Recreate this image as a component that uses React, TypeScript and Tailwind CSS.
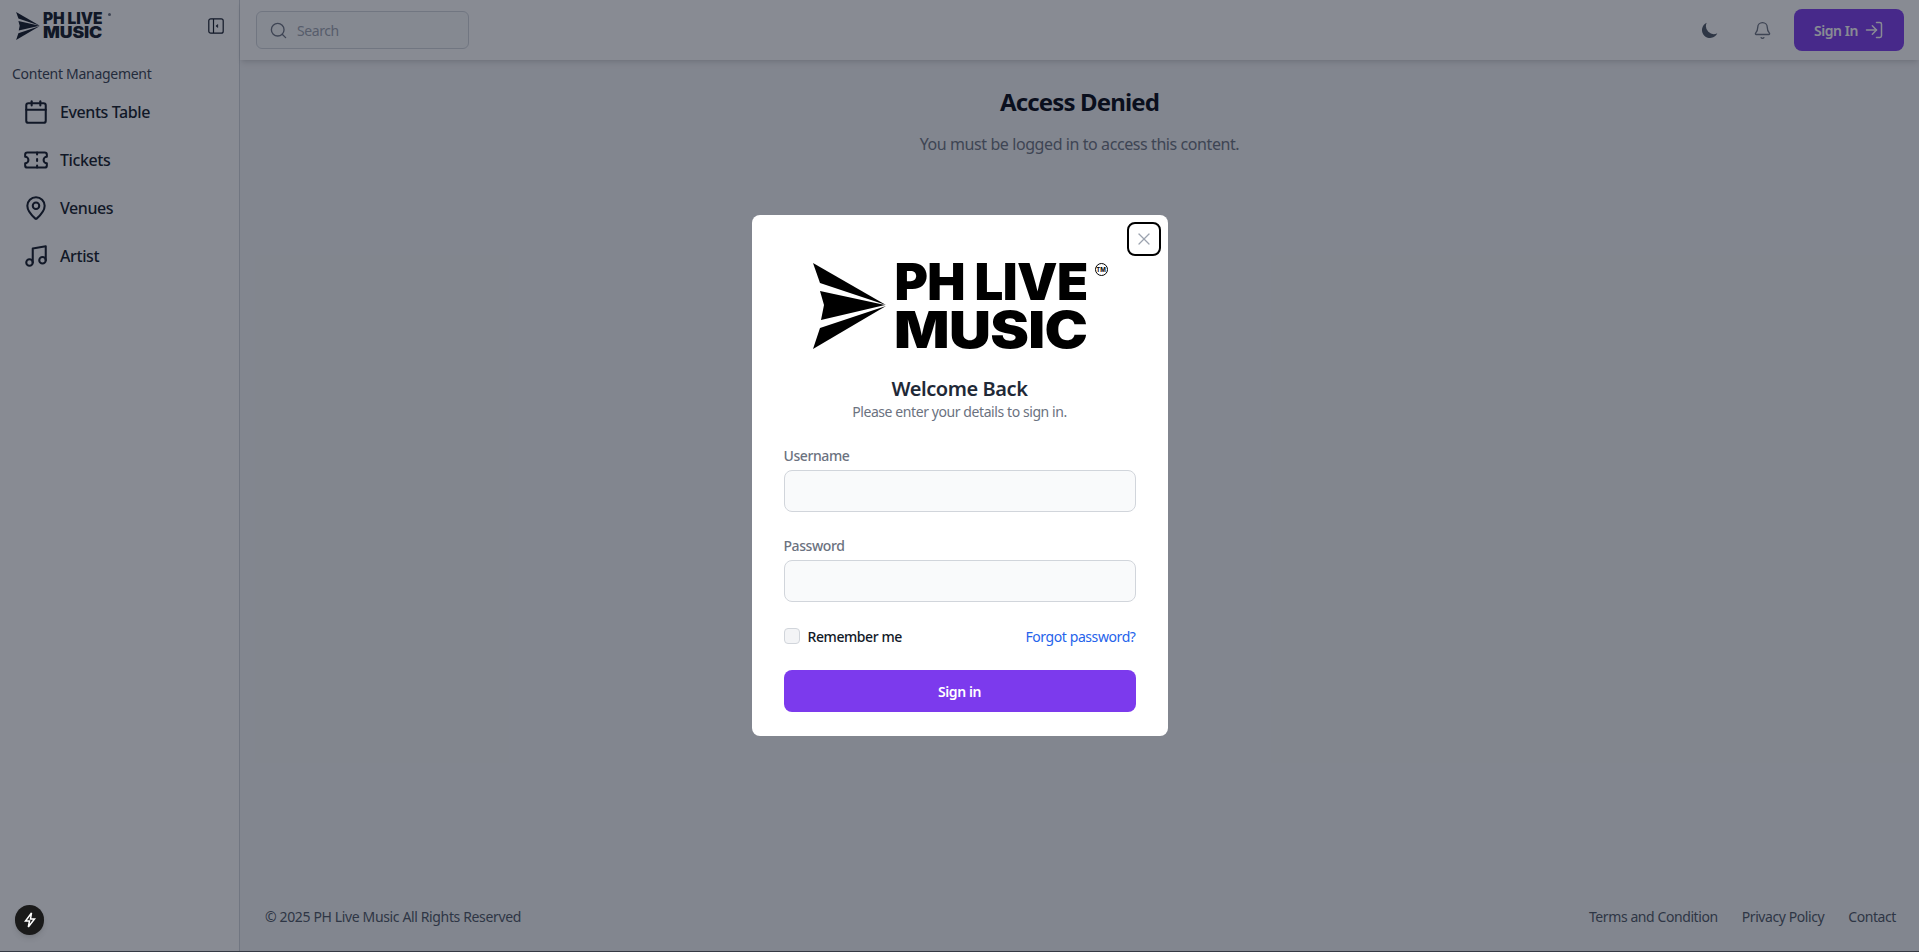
import { Bell, Calendar, LogIn, MapPin, Music, Search, Ticket, X } from "lucide-react";

const font = { fontFamily: '"Noto Sans", sans-serif' };

function Arrow({ className }: { className: string }) {
  return (
    <svg viewBox="0 0 73 86" className={className} fill="currentColor">
      <polygon points="0,0 73,42 7,20" />
      <polygon points="7,28 72,42 8,57 11,42" />
      <polygon points="73,43 7,65 0,86" />
    </svg>
  );
}

function Toggle() {
  return (
    <svg viewBox="0 0 16 16" className="w-[16px] h-[16px] mt-[6px] text-[#111827]" fill="none" stroke="currentColor" strokeWidth="1.2">
      <rect x="0.8" y="0.8" width="14.4" height="14.4" rx="2" />
      <path d="M5.5 1v14" />
      <path d="M10 6.6 8.6 8l1.4 1.4" strokeWidth="1.3" />
    </svg>
  );
}

const nav = [
  { label: "Events Table", Icon: Calendar },
  { label: "Tickets", Icon: Ticket },
  { label: "Venues", Icon: MapPin },
  { label: "Artist", Icon: Music },
];

function Sidebar() {
  return (
    <aside className="w-[240px] shrink-0 bg-white border-r border-[#d1d5db] flex flex-col">
      <div className="h-[60px] flex items-start justify-between pt-[12px] pl-[16px] pr-[15px]">
        <div className="flex items-center gap-[3px] text-[#111827]">
          <Arrow className="w-[24px] h-[28px]" />
          <div className="relative font-black text-[15.5px] leading-[14px] tracking-[-0.1px] whitespace-nowrap" style={{ fontFamily: "Inter, sans-serif" }}>
            <div>PH LIVE</div>
            <div className="origin-left scale-x-[1.14]">MUSIC</div>
            <span className="absolute top-[1px] left-[65px] w-[3px] h-[3px] rounded-full bg-[#6b7280]" />
          </div>
        </div>
        <Toggle />
      </div>
      <div className="pl-[12px] mt-[4px] text-[14px] leading-[20px] text-[#374151] tracking-[-0.02em]">Content Management</div>
      <nav className="mt-[4px] pl-[23px] flex flex-col">
        {nav.map(({ label, Icon }) => (
          <div key={label} className="h-[48px] flex items-center gap-[11px] text-[#111827]">
            <Icon className="w-[26px] h-[26px]" strokeWidth={1.9} />
            <span className="text-[16px] font-medium">{label}</span>
          </div>
        ))}
      </nav>
    </aside>
  );
}

function Header() {
  return (
    <header className="h-[60px] shrink-0 bg-white shadow-md flex items-center justify-between pl-[16px] pr-[15px]">
      <div className="w-[213px] h-[38px] rounded-[6px] border border-[#d1d5db] bg-[#f9fafb] flex items-center pl-[12px] gap-[9px]">
        <Search className="w-[19px] h-[19px] text-[#6b7280]" strokeWidth={1.7} />
        <span className="text-[14px] text-[#9ca3af]">Search</span>
      </div>
      <div className="flex items-center">
        <svg viewBox="0 0 20 20" className="w-[20px] h-[20px] text-[#4b5563] mr-[33px]" fill="currentColor">
          <path d="M17.293 13.293A8 8 0 016.707 2.707a8.001 8.001 0 1010.586 10.586z" />
        </svg>
        <Bell className="w-[19px] h-[19px] text-[#6b7280] mr-[22px]" strokeWidth={1.7} />
        <div className="w-[110px] h-[42px] rounded-[8px] bg-[#7c3aed] text-white flex items-center justify-center gap-[6px] text-[14px] font-semibold">
          Sign In
          <LogIn className="w-[20px] h-[20px]" strokeWidth={1.8} />
        </div>
      </div>
    </header>
  );
}

function Main() {
  return (
    <div className="flex-1 min-w-0 flex flex-col bg-[#f3f4f6]">
      <Header />
      <main className="flex-1 flex flex-col items-center pt-[26px]">
        <h1 className="text-[24px] leading-[32px] font-bold text-[#030712] tracking-[-0.036em]">Access Denied</h1>
        <p className="mt-[14px] text-[16px] leading-[24px] text-[#6b7280]">You must be logged in to access this content.</p>
      </main>
      <footer className="h-[70px] shrink-0 flex items-center justify-between pl-[25px] pr-[23px] text-[14px] text-[#4b5563]">
        <span className="tracking-[-0.026em]">© 2025 PH Live Music All Rights Reserved</span>
        <div className="flex gap-[24px]">
          <span>Terms and Condition</span>
          <span>Privacy Policy</span>
          <span>Contact</span>
        </div>
      </footer>
    </div>
  );
}

function Field({ label }: { label: string }) {
  return (
    <div>
      <div className="text-[14px] leading-[20px] font-medium text-[#6b7280] mb-[4px]">{label}</div>
      <div className="h-[42px] rounded-[8px] border border-[#d1d5db] bg-[#f9fafb]" />
    </div>
  );
}

function Modal() {
  return (
    <div className="absolute inset-0 z-10 bg-[rgba(17,24,39,0.5)] flex items-center justify-center pb-[1px]">
      <div className="relative w-[416px] bg-white rounded-[8px] pt-[48px] pb-[24px] px-[32px]">
        <div className="absolute top-[7px] right-[7px] w-[34px] h-[34px] rounded-[8px] border-2 border-black flex items-center justify-center text-[#9ca3af]">
          <X className="w-[20px] h-[20px]" strokeWidth={1.5} />
        </div>
        <div className="flex justify-center text-black">
          <div className="h-[86px] flex items-start gap-[8px] pr-[18px]">
            <Arrow className="w-[73px] h-[86px]" />
            <div className="relative font-black text-[51px] leading-[48px] tracking-[-0.6px] mt-[-5px] whitespace-nowrap" style={{ fontFamily: "Inter, sans-serif" }}>
              <div>PH LIVE</div>
              <div className="origin-left scale-x-[1.14]">MUSIC</div>
              <span className="absolute top-[5px] right-[-20px] w-[13px] h-[13px] rounded-full border border-black flex items-center justify-center text-[6px] leading-none font-bold tracking-normal">TM</span>
            </div>
          </div>
        </div>
        <h2 className="mt-[26px] text-center text-[20px] leading-[28px] font-semibold text-[#1f2937]">Welcome Back</h2>
        <p className="text-center text-[14px] leading-[20px] text-[#6b7280] -mt-[1px]">Please enter your details to sign in.</p>
        <div className="mt-[24px] flex flex-col gap-[24px]">
          <Field label="Username" />
          <Field label="Password" />
          <div className="flex items-center justify-between h-[20px]">
            <div className="flex items-center gap-[8px]">
              <div className="w-[16px] h-[16px] rounded-[4px] border border-[#d1d5db] bg-[#f3f4f6]" />
              <span className="text-[14px] font-medium text-[#111827]">Remember me</span>
            </div>
            <span className="text-[14px] text-[#2563eb]">Forgot password?</span>
          </div>
          <div className="h-[42px] rounded-[8px] bg-[#7c3aed] text-white text-[14px] font-semibold flex items-center justify-center">Sign in</div>
        </div>
      </div>
    </div>
  );
}

export default function App() {
  return (
    <div className="relative h-[952px] w-full overflow-hidden flex flex-col tracking-[-0.026em]" style={font}>
      <div className="flex-1 min-h-0 flex">
        <Sidebar />
        <Main />
      </div>
      <div className="h-px shrink-0 bg-[#595b60]" />
      <Modal />
      <div className="absolute z-20 left-[15px] bottom-[17px] w-[29px] h-[30px] rounded-full bg-[#1a1a1a] flex items-center justify-center text-white shadow-md">
        <svg viewBox="0 0 16 16" className="w-[16px] h-[16px]" fill="none" stroke="currentColor" strokeWidth="1.5" strokeLinejoin="miter">
          <path d="M9.5 1 3.5 9h4l-1.2 6 6.2-8h-4z" />
        </svg>
      </div>
    </div>
  );
}
